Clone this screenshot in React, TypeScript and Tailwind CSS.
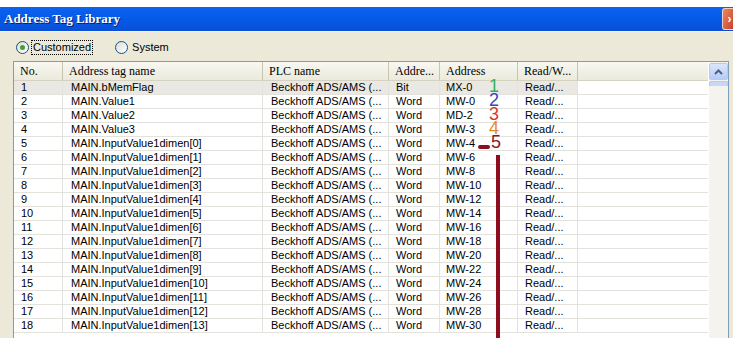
import React from "react";

const rows = [
  { no: 1, name: "MAIN.bMemFlag", type: "Bit", addr: "MX-0" },
  { no: 2, name: "MAIN.Value1", type: "Word", addr: "MW-0" },
  { no: 3, name: "MAIN.Value2", type: "Word", addr: "MD-2" },
  { no: 4, name: "MAIN.Value3", type: "Word", addr: "MW-3" },
  ...Array.from({ length: 14 }, (_, i) => ({
    no: i + 5,
    name: `MAIN.InputValue1dimen[${i}]`,
    type: "Word",
    addr: `MW-${i === 0 ? 4 : 4 + i * 2}`,
  })),
];

const headers = [
  { label: "No.", w: "w-[49px]" },
  { label: "Address tag name", w: "w-[200px]" },
  { label: "PLC name", w: "w-[126px]" },
  { label: "Addre...", w: "w-[51px]" },
  { label: "Address", w: "w-[78px]" },
  { label: "Read/W...", w: "w-[60px]" },
];

const Radio = ({ checked, label, focus }: { checked?: boolean; label: string; focus?: boolean }) => (
  <div className="flex items-center gap-[3px]">
    <span className="flex h-[13px] w-[13px] items-center justify-center rounded-full border border-[#1c5180] bg-gradient-to-br from-[#dcdcd6] to-white">
      {checked && <span className="h-[5px] w-[5px] rounded-full bg-[#40a040]" />}
    </span>
    <span className={`px-[1px] leading-[13px] ${focus ? "outline outline-1 outline-dotted outline-black" : ""}`}>{label}</span>
  </div>
);

export default function App() {
  return (
    <div className="relative h-[338px] w-[740px] overflow-hidden bg-white" style={{ fontFamily: "'Liberation Sans', Arial, sans-serif" }}>
      <div className="mt-[7px] w-[733px]">
        {/* title bar */}
        <div className="flex h-[24px] items-center justify-between bg-gradient-to-b from-[#0c63ee] via-[#0559e8] to-[#0a4fd6] pl-[4px]">
          <span
            className="text-[13px] font-bold text-white [text-shadow:1px_1px_0_#0a1c6a]"
            style={{ fontFamily: "'Liberation Serif', serif" }}
          >
            Address Tag Library
          </span>
          <div className="flex h-[22px] w-[11px] items-center justify-center rounded-l-[3px] border border-r-0 border-white/70 bg-gradient-to-br from-[#e88a60] to-[#c8402a] pl-[3px] text-[12px] font-bold leading-none text-white">
            ›
          </div>
        </div>

        {/* body */}
        <div className="h-[314px] border-t border-[#f6f4ec] bg-[#ece9d8] pl-[13px] pt-[7px] text-[11px] text-black">
          <div className="flex h-[16px] items-center gap-[23px] pl-[3px]">
            <Radio checked label="Customized" focus />
            <Radio label="System" />
          </div>

          {/* list box */}
          <div className="relative mt-[6px] flex h-[300px] w-[716px] border border-[#7f9db9] bg-white">
            <div className="w-[694px]">
              {/* header */}
              <div className="flex h-[19px] border-b border-[#d6d2c2] bg-gradient-to-b from-[#f8f7f2] to-[#ebeadb]" style={{ fontFamily: "'Liberation Serif', serif" }}>
                {headers.map((h, i) => (
                  <div key={i} className={`${h.w} flex items-center border-r border-[#c7c5b2] pl-[6px] text-[12px]`}>
                    {h.label}
                  </div>
                ))}
              </div>
              {/* rows */}
              {rows.map((r) => (
                <div key={r.no} className="flex h-[14px] border-b border-[#e3e2dc] leading-[13px]">
                  <div className={`flex w-[564px] ${r.no === 1 ? "bg-[#e9e8e2]" : ""}`}>
                    <div className="w-[49px] border-r border-[#e3e2dc] pl-[7px]">{r.no}</div>
                    <div className="w-[200px] border-r border-[#e3e2dc] pl-[8px]">{r.name}</div>
                    <div className="w-[126px] border-r border-[#e3e2dc] pl-[8px]">Beckhoff ADS/AMS (...</div>
                    <div className="w-[51px] border-r border-[#e3e2dc] pl-[7px]">{r.type}</div>
                    <div className="w-[78px] border-r border-[#e3e2dc] pl-[6px]">{r.addr}</div>
                    <div className="w-[60px] border-r border-[#e3e2dc] pl-[7px]">Read/...</div>
                  </div>
                </div>
              ))}
            </div>

            {/* scrollbar */}
            <div className="ml-auto flex w-[19px] flex-col bg-[#f4f3ee] pt-[1px]">
              <div className="flex h-[17px] items-center justify-center rounded-[2px] border border-[#b8c8f0] bg-gradient-to-b from-[#dce6fd] to-[#b6cbf6]">
                <svg width="9" height="6" viewBox="0 0 9 6">
                  <path d="M1 5 L4.5 1.5 L8 5" fill="none" stroke="#4d6185" strokeWidth="2" />
                </svg>
              </div>
              <div className="mt-[1px] h-[5px] rounded-t-[2px] border border-b-0 border-[#b8c8f0] bg-[#c8d6f8]" />
            </div>

            {/* annotations */}
            <div className="pointer-events-none absolute left-[470px] top-[17px] flex w-[20px] flex-col items-center text-[18px] leading-[14px]" style={{ fontFamily: "'Liberation Sans', Arial, sans-serif" }}>
              <span className="text-[#36b060]">1</span>
              <span className="text-[#3545c4]">2</span>
              <span className="text-[#da3630]">3</span>
              <span className="text-[#e38a2a]">4</span>
              <span className="pl-[4px] text-[#8e1428]">5</span>
            </div>
            <div className="pointer-events-none absolute left-[464px] top-[83px] h-[4px] w-[12px] rounded-full bg-[#8b0f1f]" />
            <div className="pointer-events-none absolute left-[482px] top-[93px] h-[220px] w-[4px] bg-[#8b0f1f]" />
          </div>
        </div>
      </div>
    </div>
  );
}
